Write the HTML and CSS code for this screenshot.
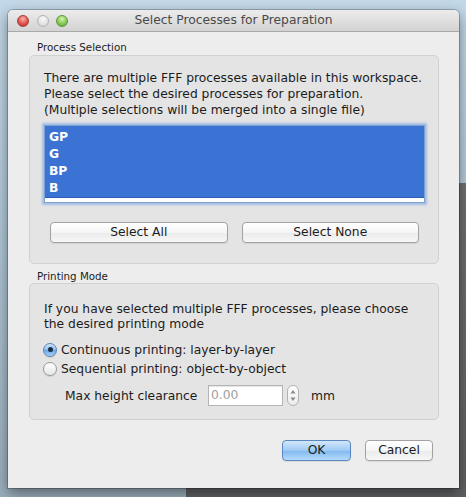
FILE: index.html
```html
<!DOCTYPE html>
<html>
<head>
<meta charset="utf-8">
<link rel="stylesheet" href="styles.css">
</head>
<body>
<div class="desktop">
  <div class="window">
    <div class="titlebar">
      <div class="lights">
        <span class="light red"></span>
        <span class="light gray"></span>
        <span class="light green"></span>
      </div>
      <div class="title">Select Processes for Preparation</div>
    </div>
    <div class="content">
      <div class="group-label">Process Selection</div>
      <div class="group-box box1">
        <p class="desc desc1">There are multiple FFF processes available in this workspace.<br>Please select the desired processes for preparation.<br>(Multiple selections will be merged into a single file)</p>
        <div class="list">
          <div class="items">
            <div class="item">GP</div>
            <div class="item">G</div>
            <div class="item">BP</div>
            <div class="item">B</div>
          </div>
        </div>
        <div class="btn-row">
          <button class="btn wide">Select All</button>
          <button class="btn wide">Select None</button>
        </div>
      </div>
      <div class="group-label label2">Printing Mode</div>
      <div class="group-box box2">
        <p class="desc desc2">If you have selected multiple FFF processes, please choose<br>the desired printing mode</p>
        <div class="radios">
          <div class="radio-row"><span class="radio checked"><span class="dot"></span></span><span>Continuous printing: layer-by-layer</span></div>
          <div class="radio-row"><span class="radio"></span><span>Sequential printing: object-by-object</span></div>
        </div>
        <div class="max-row">
          <span class="max-label">Max height clearance</span>
          <span class="spin-input">0.00</span>
          <span class="spinner">
            <svg width="10" height="19" viewBox="0 0 10 19"><path d="M5 4 L7.5 7.5 L2.5 7.5 Z" fill="#8a8a8a"/><path d="M5 15 L7.5 11.5 L2.5 11.5 Z" fill="#8a8a8a"/></svg>
          </span>
          <span class="unit">mm</span>
        </div>
      </div>
      <div class="footer">
        <button class="btn primary ok">OK</button>
        <button class="btn cancel">Cancel</button>
      </div>
    </div>
  </div>
</div>
</body>
</html>
```
FILE: styles.css
```css
* { box-sizing: border-box; }
html, body { margin: 0; padding: 0; }
body {
  width: 466px;
  height: 497px;
  overflow: hidden;
  font-family: "DejaVu Sans", "Liberation Sans", sans-serif;
  font-size: 12.3px;
  color: #1c1c1c;
}
.desktop {
  height: 497px;
  padding: 10px 7px 9px 8px;
  background:
    linear-gradient(#6e7072, #5f6163) right bottom / 280px 314px no-repeat,
    linear-gradient(180deg, #c3d8e8 0%, #afc5d5 50%, #9aaebc 100%);
}
.window {
  width: 451px;
  height: 478px;
  background: #ededed;
  border-radius: 5px 5px 0 0;
  box-shadow: 0 0 0 1px rgba(0,0,0,0.22), 0 5px 14px rgba(0,0,0,0.45);
  display: flex;
  flex-direction: column;
  overflow: hidden;
}
.titlebar {
  height: 22px;
  flex: none;
  background: linear-gradient(#ececec, #d3d3d3);
  border-bottom: 1px solid #a9a9a9;
  display: grid;
  align-items: center;
}
.lights, .title { grid-area: 1 / 1; }
.lights {
  display: flex;
  gap: 7.5px;
  padding-left: 9px;
  align-items: center;
}
.light {
  width: 12px;
  height: 12px;
  border-radius: 50%;
  display: block;
}
.light.red {
  background: radial-gradient(circle at 50% 30%, #f9b3ae 0, #e0534c 55%, #b62b25 100%);
  border: 1px solid #a4403b;
}
.light.gray {
  background: radial-gradient(circle at 50% 30%, #fafafa 0, #e1e1e1 60%, #cfcfcf 100%);
  border: 1px solid #b3b3b3;
}
.light.green {
  background: radial-gradient(circle at 50% 30%, #d6f5b0 0, #86c955 55%, #5a9e34 100%);
  border: 1px solid #5f9640;
}
.title {
  text-align: center;
  color: #4a4a4a;
  line-height: 21px;
}
.content {
  flex: 1;
  display: flex;
  flex-direction: column;
  padding: 9px 20px 0 21px;
}
.group-label {
  font-size: 10.3px;
  line-height: 13px;
  padding-left: 8px;
  margin-bottom: 1px;
}
.label2 { margin-top: 6px; margin-bottom: 0; }
.group-box {
  background: #e4e4e4;
  border: 1px solid #d1d1d1;
  border-radius: 5px;
}
.box1 {
  height: 209px;
  padding: 14px 13px 0 14px;
}
.desc { margin: 0; }
.desc1 { line-height: 16px; }
.list {
  margin-top: 7px;
  height: 78px;
  border: 1px solid #7f9fcc;
  box-shadow: 0 0 2px 2px rgba(125, 170, 232, 0.65);
  background: #fff;
}
.items {
  background: #3a73d4;
  padding-top: 3px;
  border-bottom: 1px solid #2c5fb6;
}
.item {
  height: 17px;
  line-height: 17px;
  color: #fff;
  font-weight: bold;
  padding-left: 4px;
}
.btn-row {
  display: flex;
  gap: 14px;
  margin-top: 19px;
  padding: 0 6px;
}
.btn {
  height: 21px;
  border: 1px solid #a2a2a2;
  border-radius: 4px;
  background: linear-gradient(#ffffff 0%, #f5f5f5 50%, #ebebeb 52%, #f7f7f7 100%);
  font: inherit;
  color: #1c1c1c;
  box-shadow: 0 1px 1px rgba(0,0,0,0.08);
  padding: 0;
  line-height: 19px;
}
.btn.wide { flex: 1; }
.box2 {
  height: 137px;
  padding: 18px 13px 0 14px;
}
.desc2 { line-height: 15px; }
.radios { margin-top: 8px; }
.radio-row {
  display: flex;
  align-items: center;
  height: 19px;
  gap: 4px;
  margin-left: -1px;
}
.radio {
  width: 14px;
  height: 14px;
  border-radius: 50%;
  border: 1px solid #9a9a9a;
  background: linear-gradient(#ffffff, #e6e6e6);
  display: flex;
  align-items: center;
  justify-content: center;
  flex: none;
  box-shadow: 0 1px 1px rgba(0,0,0,0.1);
}
.radio.checked {
  border-color: #5b84b3;
  background: linear-gradient(#cfe4fa 0%, #8ebef0 50%, #69a6e8 52%, #a8d2f8 100%);
}
.dot {
  width: 5px;
  height: 5px;
  border-radius: 50%;
  background: #1b2b44;
}
.max-row {
  display: flex;
  align-items: center;
  margin-top: 7px;
  padding-left: 21px;
}
.max-label { width: 143px; }
.spin-input {
  width: 75px;
  height: 21px;
  border: 1px solid #b4b4b4;
  background: #fff;
  color: #9c9c9c;
  padding-left: 2px;
  line-height: 19px;
  box-shadow: inset 0 1px 1px rgba(0,0,0,0.1);
}
.spinner {
  width: 12px;
  height: 21px;
  margin-left: 4px;
  border: 1px solid #b2b2b2;
  border-radius: 6px;
  background: linear-gradient(#fdfdfd, #ececec);
  display: flex;
  align-items: center;
  justify-content: center;
}
.unit { margin-left: 12px; }
.footer {
  display: flex;
  justify-content: flex-end;
  gap: 14px;
  margin-top: 20px;
  margin-right: 6px;
}
.ok { width: 69px; }
.cancel { width: 68px; }
.btn.primary {
  border-color: #5a87bf;
  background: linear-gradient(#d2e7fb 0%, #9ecaf4 50%, #80b9f0 52%, #b5dafc 100%);
}
```
